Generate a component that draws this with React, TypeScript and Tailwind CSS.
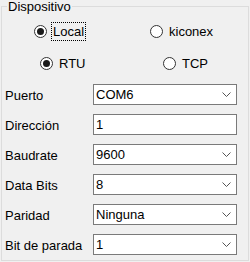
import clsx from "clsx";

interface RadioProps {
    checked?: boolean;
    label: string;
    focused?: boolean;
}

function Radio({checked, label, focused}: RadioProps) {
    return (
        <div className="flex items-center h-[19px]">
            <span className="w-[13px] h-[13px] rounded-full border border-[#333333] bg-white flex items-center justify-center">
                {checked ? <span className="w-[7px] h-[7px] rounded-full bg-[#1a1a1a]"/> : null}
            </span>
            <span
                className={clsx(
                    "ml-[4px] px-[1px] h-[19px] leading-[17px] border",
                    focused ? "border-dotted border-black" : "border-transparent"
                )}
            >
                {label}
            </span>
        </div>
    );
}

function Chevron() {
    return (
        <svg width="9" height="5" viewBox="0 0 9 5" className="mr-[5px]">
            <path d="M0.5 0.5 L4.5 4.5 L8.5 0.5" fill="none" stroke="#555555" strokeWidth="1"/>
        </svg>
    );
}

interface FieldProps {
    label: string;
    value: string;
    combo?: boolean;
}

function Field({label, value, combo}: FieldProps) {
    return (
        <div className="flex items-center h-[21px] mb-[9px]">
            <span className="w-[91px] pl-[3px] pt-[2px]">{label}</span>
            <div className="w-[144px] h-[21px] border border-[#7a7a7a] bg-white flex items-center justify-between pl-[2px]">
                <span>{value}</span>
                {combo ? <Chevron/> : null}
            </div>
        </div>
    );
}

export default function App() {
    return (
        <div className="w-[250px] h-[262px] bg-[#f0f0f0] pt-[6px] pl-[1px] text-[13px] text-black font-['Liberation_Sans',Arial,sans-serif]">
            <div className="relative w-[248px] h-[255px] border border-[#dcdcdc]">
                {/* legend sits over the top border */}
                <span className="absolute -top-[7px] left-[5px] px-[1px] bg-[#f0f0f0] leading-[14px]">
                    Dispositivo
                </span>

                {/* ===== RADIOS ===== */}
                <div className="flex mt-[15px]">
                    <div className="w-[116px] pl-[32px]">
                        <Radio checked focused label="Local"/>
                    </div>
                    <div className="pl-[32px]">
                        <Radio label="kiconex"/>
                    </div>
                </div>
                <div className="flex mt-[13px]">
                    <div className="w-[123px] pl-[38px]">
                        <Radio checked label="RTU"/>
                    </div>
                    <div className="pl-[38px]">
                        <Radio label="TCP"/>
                    </div>
                </div>

                {/* ===== FIELDS ===== */}
                <div className="mt-[11px]">
                    <Field label="Puerto" value="COM6" combo/>
                    <Field label="Dirección" value="1"/>
                    <Field label="Baudrate" value="9600" combo/>
                    <Field label="Data Bits" value="8" combo/>
                    <Field label="Paridad" value="Ninguna" combo/>
                    <Field label="Bit de parada" value="1" combo/>
                </div>
            </div>
        </div>
    );
}
